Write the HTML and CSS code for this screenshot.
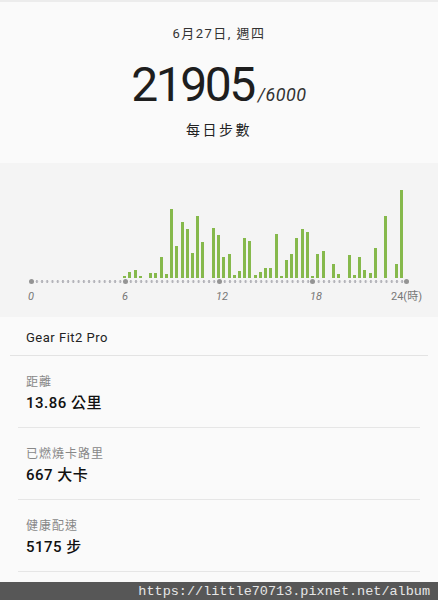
FILE: index.html
```html
<!DOCTYPE html>
<html lang="zh-Hant">
<head>
    <meta charset="UTF-8">
    <meta name="viewport" content="width=device-width, initial-scale=1.0">
    <title>每日步數</title>
    <link rel="stylesheet" href="styles.css">
</head>
<body>
    <header class="summary">
        <div class="date">6月27日, 週四</div>
        <div class="steps">21905<span class="goal">/6000</span></div>
        <div class="caption">每日步數</div>
    </header>

    <section class="chart">
        <div class="bars" id="bars"></div>
        <div class="axis">
            <span class="tick"></span>
            <span class="tick"></span>
            <span class="tick"></span>
            <span class="tick"></span>
            <span class="tick"></span>
        </div>
        <div class="labels">
            <span>0</span>
            <span>6</span>
            <span>12</span>
            <span>18</span>
            <span class="last">24(時)</span>
        </div>
    </section>

    <section class="details">
        <div class="device">Gear Fit2 Pro</div>
        <div class="item">
            <div class="label">距離</div>
            <div class="value">13.86 公里</div>
        </div>
        <div class="item">
            <div class="label">已燃燒卡路里</div>
            <div class="value">667 大卡</div>
        </div>
        <div class="item">
            <div class="label">健康配速</div>
            <div class="value">5175 步</div>
        </div>
    </section>

    <footer class="watermark">https://little70713.pixnet.net/album</footer>

    <script>
        // one value per 20 minutes, 72 slots in the day (bar height in px)
        const steps = [
            0, 0, 0, 0, 0, 0, 0, 0, 0, 0, 0, 0, 0, 0, 0, 0, 0, 0,
            2, 6, 8, 2, 0, 5, 5, 21, 4, 69, 32, 56, 49, 25, 62, 36, 0, 50,
            43, 21, 24, 3, 7, 40, 37, 3, 6, 10, 10, 44, 2, 18, 24, 40, 49, 46,
            2, 24, 27, 0, 14, 4, 0, 23, 3, 21, 8, 5, 30, 0, 62, 0, 14, 88
        ];

        const bars = document.getElementById('bars');
        steps.forEach(function (h) {
            const slot = document.createElement('div');
            slot.className = 'slot';
            if (h > 0) {
                const bar = document.createElement('div');
                bar.className = 'bar';
                bar.style.height = h + 'px';
                slot.appendChild(bar);
            }
            bars.appendChild(slot);
        });
    </script>
</body>
</html>
```

FILE: styles.css
```css
body {
    margin: 0;
    background-color: #fafafa;
    font-family: Roboto, "Noto Sans CJK TC", sans-serif;
    color: #222;
    border-top: 2px solid #ececec;
}
.summary {
    text-align: center;
    padding: 23px 0 23px;
}
.date {
    font-size: 13px;
    line-height: 18px;
    letter-spacing: 1.5px;
    color: #333;
}
.steps {
    margin-top: 18px;
    font-size: 48px;
    line-height: 48px;
    height: 48px;
    letter-spacing: -2.5px;
    color: #1e1e1e;
}
.goal {
    font-size: 18px;
    line-height: 18px;
    font-style: italic;
    letter-spacing: 0.5px;
    color: #333;
    margin-left: 4px;
}
.caption {
    margin-top: 11px;
    font-size: 14px;
    line-height: 20px;
    letter-spacing: 2.5px;
    color: #222;
}
.chart {
    background-color: #f4f4f4;
    padding: 27px 0 13px;
}
.bars {
    display: grid;
    grid-template-columns: repeat(72, 1fr);
    align-items: end;
    height: 88px;
    width: 376px;
    margin-left: 28px;
}
.slot {
    display: flex;
    justify-content: center;
    align-items: flex-end;
    height: 100%;
}
.bar {
    width: 3px;
    background-color: #86b94c;
}
.axis {
    display: flex;
    justify-content: space-between;
    align-items: center;
    width: 380px;
    height: 5px;
    margin: 1px 0 0 29px;
    background-image: radial-gradient(circle, #b4b4ba 1.1px, transparent 1.4px);
    background-size: 5.22px 5px;
    background-position: 0 0;
}
.tick {
    width: 5px;
    height: 5px;
    border-radius: 50%;
    background-color: #949494;
}
.labels {
    display: grid;
    grid-template-columns: repeat(4, 94px) auto;
    margin: 6px 0 0 28px;
    font-size: 11px;
    line-height: 14px;
    font-style: italic;
    color: #777;
}
.labels .last {
    margin-left: -13px;
    font-style: normal;
}
.details {
    background-color: #fafafa;
    padding-bottom: 10px;
}
.device {
    margin: 0 10px;
    padding: 12px 16px 8px;
    font-size: 13px;
    line-height: 18px;
    letter-spacing: 0.5px;
    color: #222;
    border-bottom: 1px solid #e3e3e3;
}
.item {
    margin: 0 18px;
    padding: 18px 8px 14px;
    border-bottom: 1px solid #e6e6e6;
}
.label {
    font-size: 12px;
    line-height: 16px;
    letter-spacing: 1px;
    color: #888;
}
.value {
    margin-top: 3px;
    font-size: 15px;
    line-height: 20px;
    font-weight: 500;
    letter-spacing: 0.5px;
    color: #111;
}
.watermark {
    background-color: #575757;
    color: #e6e6e6;
    font-family: "Liberation Mono", monospace;
    font-size: 13.5px;
    line-height: 19px;
    text-align: right;
    padding-right: 8px;
}
```
